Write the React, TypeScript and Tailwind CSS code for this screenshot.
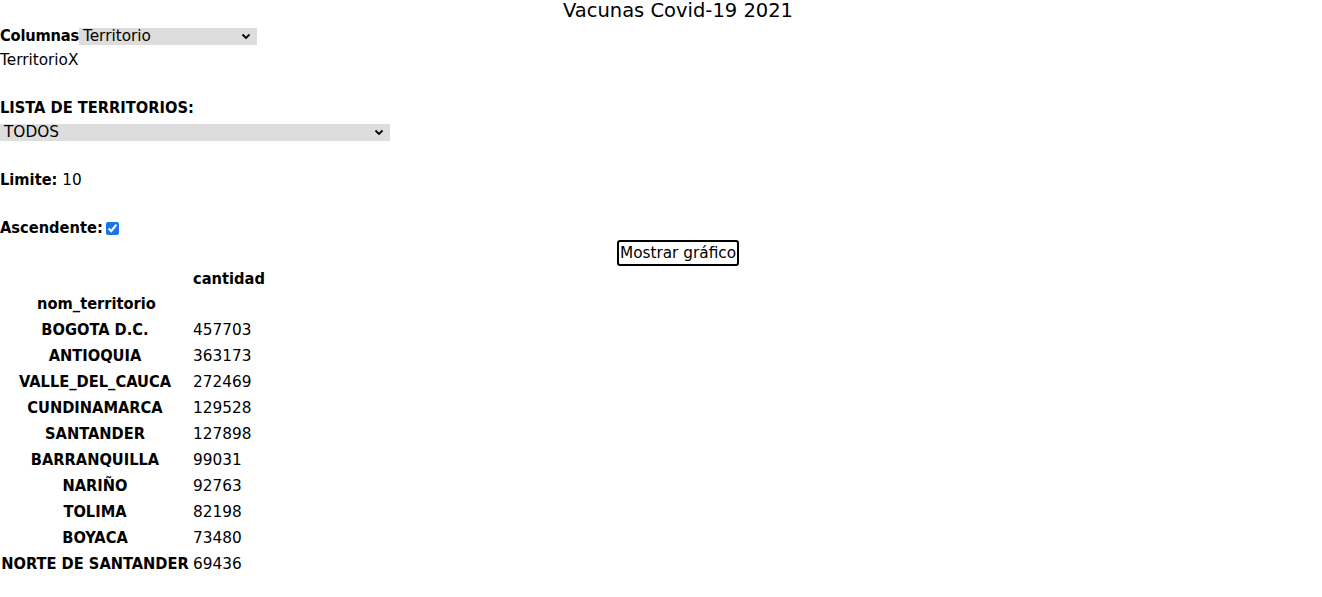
import React from 'react';

// ── Data ────────────────────────────────────────────────────────────────

const ROWS: [string, number][] = [
  ['BOGOTA D.C.', 457703],
  ['ANTIOQUIA', 363173],
  ['VALLE_DEL_CAUCA', 272469],
  ['CUNDINAMARCA', 129528],
  ['SANTANDER', 127898],
  ['BARRANQUILLA', 99031],
  ['NARIÑO', 92763],
  ['TOLIMA', 82198],
  ['BOYACA', 73480],
  ['NORTE DE SANTANDER', 69436],
];

// bold labels use the condensed cut so they keep the narrow, tall look
const BOLD = "font-bold text-[16.3px] font-['DejaVu_Sans_Condensed','DejaVu_Sans',sans-serif]";

const Chevron: React.FC = () => (
  <svg width="10" height="7" viewBox="0 0 10 7" className="shrink-0">
    <path d="M1.5 1.5 L5 5 L8.5 1.5" fill="none" stroke="#000" strokeWidth="1.8" />
  </svg>
);

const FakeSelect: React.FC<{ value: string; width: string }> = ({ value, width }) => (
  <div className={`${width} h-[17px] bg-[#dddddd] flex items-center justify-between pl-[4px] pr-[6px] leading-[17px]`}>
    <span>{value}</span>
    <Chevron />
  </div>
);

// ── Main ────────────────────────────────────────────────────────────────

export default function App() {
  return (
    <div className="min-h-screen bg-white text-black text-[15.3px] font-['DejaVu_Sans',sans-serif]">
      {/* Title */}
      <div className="h-6 leading-[22px] text-center pl-[34px] text-[19.5px]">Vacunas Covid-19 2021</div>

      {/* Columnas */}
      <div className="h-6 flex items-center pt-px">
        <span className={`${BOLD} tracking-[-0.2px]`}>Columnas</span>
        <FakeSelect value="Territorio" width="w-[178px]" />
      </div>
      <div className="h-6 leading-[24px]">TerritorioX</div>
      <div className="h-6" />

      {/* Lista */}
      <div className={`h-6 leading-[24px] ${BOLD}`}>LISTA DE TERRITORIOS:</div>
      <div className="h-6 flex items-center">
        <FakeSelect value="TODOS" width="w-[390px]" />
      </div>
      <div className="h-6" />

      <div className="h-6 leading-[24px]">
        <span className={BOLD}>Limite:</span> 10
      </div>
      <div className="h-6" />

      <div className="h-6 flex items-center">
        <span className={BOLD}>Ascendente:</span>
        <input type="checkbox" defaultChecked className="ml-[3px] w-[13px] h-[13px] accent-[#1a73e8]" />
      </div>

      {/* Button */}
      <div className="h-[26px] flex justify-center pl-[34px]">
        <button className="h-[26px] px-[1px] border-2 border-black rounded-[3px] bg-white leading-[20px] text-[15.3px]">
          Mostrar gráfico
        </button>
      </div>

      {/* Table */}
      <table className="border-collapse mt-[1px]">
        <thead>
          <tr className="h-[24px]">
            <th className="w-[193px] p-0"></th>
            <th className={`p-0 text-left leading-[24px] ${BOLD}`}>cantidad</th>
          </tr>
          <tr className="h-[26px]">
            <th className={`p-0 text-center leading-[26px] ${BOLD}`}>nom_territorio</th>
            <th className="p-0"></th>
          </tr>
        </thead>
        <tbody>
          {ROWS.map(([name, value]) => (
            <tr key={name} className="h-[26px]">
              <th className={`p-0 pr-[3px] text-center leading-[26px] whitespace-nowrap ${BOLD}`}>{name}</th>
              <td className="p-0 leading-[26px]">{value}</td>
            </tr>
          ))}
        </tbody>
      </table>
    </div>
  );
}
